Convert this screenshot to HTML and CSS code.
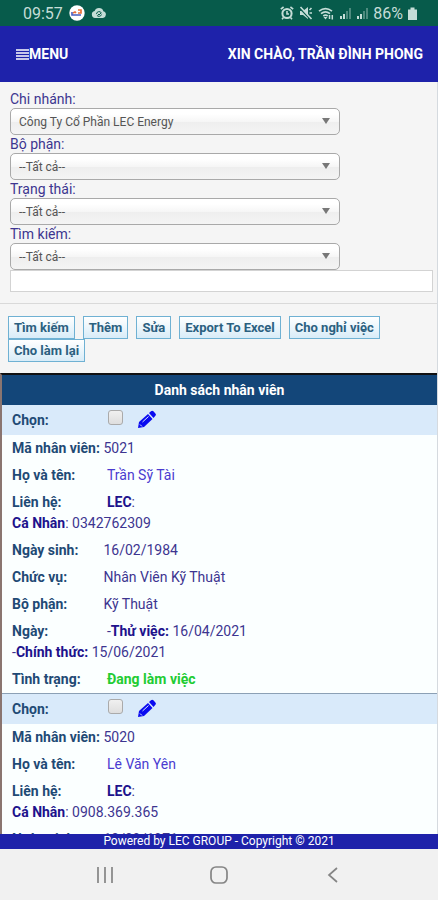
FILE: index.html
```html
<!DOCTYPE html>
<html lang="vi">
<head>
  <meta charset="UTF-8">
  <meta name="viewport" content="width=device-width, initial-scale=1.0">
  <title>Danh sách nhân viên</title>
  <link rel="stylesheet" href="styles.css">
</head>
<body>
  <div class="status_bar">
    <span class="time">09:57</span>
    <svg class="app_icon" width="16" height="16" viewBox="0 0 16 16">
      <circle cx="8" cy="8" r="7.7" fill="#fff"/>
      <path d="M3 7v3h9" fill="none" stroke="#4a5dc0" stroke-width="1.6"/>
      <path d="M4 8l2-1 1 1M9 5h3v3H9" fill="none" stroke="#e8703a" stroke-width="1.7"/>
    </svg>
    <svg width="16" height="12" viewBox="0 0 16 12">
      <path d="M4 11a3.500 3.500 0 0 1-.4-6.900A4.600 4.600 0 0 1 12.400 4.200 3.500 3.500 0 0 1 12 11z" fill="#c5ddd7"/>
      <path d="M5.500 7a2.600 2.600 0 0 1 5-.8M10.500 7.500a2.600 2.600 0 0 1-4.600.8M7 7l1 1 2-2" fill="none" stroke="#075b4b" stroke-width="1"/>
    </svg>
    <span class="status_right">
      <svg width="14" height="14" viewBox="0 0 14 14" fill="none" stroke="#c5ddd7" stroke-width="2">
        <circle cx="7" cy="7.500" r="4.600"/>
        <path d="M.8 3.200L3.600 1M13.200 3.200L10.400 1M7 5v3h2M3.500 11.500L2 13.200M10.500 11.500l1.500 1.700" stroke-width="1.600"/>
      </svg>
      <svg width="14" height="14" viewBox="0 0 14 14">
        <path d="M1 5h3l5-4v12L4 9H1z" fill="#c5ddd7"/>
        <path d="M1 2.500l10.500 11" stroke="#075b4b" stroke-width="1.400"/>
        <path d="M1.500 1l11 12M10.500 4l2-2M10.500 7H13" stroke="#c5ddd7" stroke-width="1.600"/>
      </svg>
      <svg width="16" height="13" viewBox="0 0 16 13" fill="none" stroke="#c5ddd7" stroke-width="1.700">
        <path d="M1 4.200Q7.500-1 14 4.200M3 6.700q4.500-3.500 9 0M5.300 9q2.200-1.800 4.400 0"/>
        <path d="M7.500 12.500l-2-2.500h4z" fill="#c5ddd7" stroke="none"/>
        <path d="M11.500 12V8M14.300 8v4.500" stroke-width="1.500"/>
      </svg>
      <svg width="12" height="12" viewBox="0 0 12 12">
        <path d="M1 9h2v3H1zM4 7h2v5H4z" fill="#c5ddd7"/>
        <path d="M7 4h2v8H7zM10 1h2v11h-2z" fill="#4d8b7e"/>
      </svg>
      <svg width="12" height="12" viewBox="0 0 12 12">
        <path d="M1 9h2v3H1zM4 7h2v5H4z" fill="#c5ddd7"/>
        <path d="M7 4h2v8H7zM10 1h2v11h-2z" fill="#4d8b7e"/>
      </svg>
      <span class="percent">86%</span>
      <svg width="9" height="13" viewBox="0 0 9 13">
        <path d="M0 2.500h2.500V0.500h4v2H9V13H0z" fill="#c5ddd7"/>
      </svg>
    </span>
  </div>

  <header class="top_bar">
    <button class="menu_btn" type="button">
      <svg width="13" height="11" viewBox="0 0 13 11" stroke="#fff" stroke-width="1.600">
        <path d="M0 1h13M0 4h13M0 7h13M0 10h13"/>
      </svg>MENU</button>
    <span class="hello">XIN CHÀO, TRẦN ĐÌNH PHONG</span>
  </header>

  <main class="content">
    <form class="filter">
      <label for="branch">Chi nhánh:</label>
      <div class="select_wrap">
        <select id="branch"><option>Công Ty Cổ Phần LEC Energy</option></select>
      </div>
      <label for="dept">Bộ phận:</label>
      <div class="select_wrap">
        <select id="dept"><option>--Tất cả--</option></select>
      </div>
      <label for="state">Trạng thái:</label>
      <div class="select_wrap">
        <select id="state"><option>--Tất cả--</option></select>
      </div>
      <label for="search_by">Tìm kiếm:</label>
      <div class="select_wrap">
        <select id="search_by"><option>--Tất cả--</option></select>
      </div>
      <input class="keyword" type="text" aria-label="Từ khóa">
    </form>

    <div class="actions">
      <button type="button">Tìm kiếm</button>
      <button type="button">Thêm</button>
      <button type="button">Sửa</button>
      <button type="button">Export To Excel</button>
      <button type="button">Cho nghỉ việc</button>
      <button type="button">Cho làm lại</button>
    </div>

    <table class="staff">
      <caption>Danh sách nhân viên</caption>
      <tbody>
        <tr>
          <td class="pick">
            <label class="name" for="pick1">Chọn:</label>
            <input type="checkbox" id="pick1">
            <a href="#" aria-label="Sửa 5021"><svg width="20" height="20" viewBox="0 0 20 20"><path d="M1 18l1-6L11 4l4.500 5L7 17zM12 3L14 1.200q1.200-1 2.400 0l2 2.200q1.200 1.200 0 2.400L16.500 8z" fill="#0a0af0"/><path d="M5.500 12l6-5.500M3 14.500l2 2" stroke="#dcebfa" stroke-width="1"/></svg></a>
          </td>
          <td><span class="name">Mã nhân viên:</span> 5021</td>
          <td><span class="name">Họ và tên:</span> &nbsp;<a href="#">Trần Sỹ Tài</a></td>
          <td><span class="name">Liên hệ:</span> &nbsp;<b>LEC</b>:<br><b>Cá Nhân</b>: 0342762309</td>
          <td><span class="name">Ngày sinh:</span> 16/02/1984</td>
          <td><span class="name">Chức vụ:</span> Nhân Viên Kỹ Thuật</td>
          <td><span class="name">Bộ phận:</span> Kỹ Thuật</td>
          <td><span class="name">Ngày:</span> &nbsp;-<b>Thử việc:</b> 16/04/2021<br>-<b>Chính thức:</b> 15/06/2021</td>
          <td><span class="name">Tình trạng:</span> &nbsp;<b class="working">Đang làm việc</b></td>
        </tr>
        <tr>
          <td class="pick">
            <label class="name" for="pick2">Chọn:</label>
            <input type="checkbox" id="pick2">
            <a href="#" aria-label="Sửa 5020"><svg width="20" height="20" viewBox="0 0 20 20"><path d="M1 18l1-6L11 4l4.500 5L7 17zM12 3L14 1.200q1.200-1 2.400 0l2 2.200q1.200 1.200 0 2.400L16.500 8z" fill="#0a0af0"/><path d="M5.500 12l6-5.500M3 14.500l2 2" stroke="#dcebfa" stroke-width="1"/></svg></a>
          </td>
          <td><span class="name">Mã nhân viên:</span> 5020</td>
          <td><span class="name">Họ và tên:</span> &nbsp;<a href="#">Lê Văn Yên</a></td>
          <td><span class="name">Liên hệ:</span> &nbsp;<b>LEC</b>:<br><b>Cá Nhân</b>: 0908.369.365</td>
          <td><span class="name">Ngày sinh:</span> 10/09/1971</td>
        </tr>
      </tbody>
    </table>
  </main>

  <footer class="copyright">Powered by LEC GROUP - Copyright © 2021</footer>

  <nav class="phone_nav">
    <button type="button" aria-label="Recent">
      <svg width="18" height="18" viewBox="0 0 18 18" stroke="#858585" stroke-width="1.700"><path d="M2 1v16M9 1v16M16 1v16"/></svg>
    </button>
    <button type="button" aria-label="Home">
      <svg width="18" height="18" viewBox="0 0 18 18" fill="none" stroke="#858585" stroke-width="1.700"><rect x="1" y="1" width="16" height="16" rx="5"/></svg>
    </button>
    <button type="button" aria-label="Back">
      <svg width="18" height="18" viewBox="0 0 18 18" fill="none" stroke="#858585" stroke-width="1.700"><path d="M13 2L5 9l8 7"/></svg>
    </button>
  </nav>
</body>
</html>
```

FILE: styles.css
```css
*{
  margin: 0;
  padding: 0;
  box-sizing: border-box;
}

body{
  display: flex;
  flex-direction: column;
  height: 100vh;
  overflow: hidden;
  font-family: Roboto, "Liberation Sans", sans-serif;
  font-size: 14px;
  color: #3d3590;
  background: #f5f5f5;
}

a{
  color: #4a3bd0;
  text-decoration: none;
}

button{
  font-family: inherit;
  border: none;
  background: none;
  cursor: pointer;
}

svg{
  display: block;
}

/* status bar */
.status_bar{
  display: flex;
  align-items: center;
  gap: 6px;
  height: 26px;
  padding: 0 21px 0 23px;
  font-size: 16px;
  color: #c5ddd7;
  background: #075b4b;
}
.status_right{
  display: flex;
  align-items: center;
  gap: 5px;
  margin-left: auto;
}

/* top bar */
.top_bar{
  display: flex;
  justify-content: space-between;
  align-items: center;
  height: 56px;
  padding: 0 15px 0 16px;
  font-weight: bold;
  color: #fff;
  background: #1e22aa;
}
.menu_btn{
  display: flex;
  align-items: center;
  font-size: 14px;
  font-weight: bold;
  color: #fff;
}

.content{
  flex: 1;
  min-height: 0;
  overflow: hidden;
  border-right: 1px solid #d5dadf;
}

/* filter */
.filter{
  padding: 8px 4px 11px 10px;
  border-bottom: 1px solid #d9d9d9;
}
.filter label{
  display: block;
  line-height: 18px;
}
.select_wrap{
  position: relative;
  width: 78%;
}
.select_wrap::after{
  content: "";
  position: absolute;
  top: 10px;
  right: 10px;
  border: 4px solid transparent;
  border-top: 6px solid #777;
  border-bottom: none;
  pointer-events: none;
}
.select_wrap select{
  display: block;
  width: 100%;
  height: 27px;
  padding: 0 8px;
  font-family: inherit;
  font-size: 12px;
  color: #555;
  appearance: none;
  border: 1px solid #a9a9a9;
  border-radius: 5px;
  background: linear-gradient(#fff 20%, #f6f6f6 50%, #eee 52%, #f4f4f4 100%);
}
.keyword{
  display: block;
  width: 100%;
  height: 22px;
  padding: 0 4px;
  border: 1px solid #d3d3d3;
  background: #fff;
}

/* action buttons */
.actions{
  display: flex;
  flex-wrap: wrap;
  column-gap: 8px;
  padding: 12px 8px 11px;
}
.actions button{
  height: 23px;
  padding: 0 5px;
  font-size: 13px;
  font-weight: bold;
  color: #2b6080;
  border: 1px solid #6fb1d3;
  background: linear-gradient(#fff, #d8ecf8);
}

/* staff list */
.staff{
  display: block;
  border-top: 2px solid #111;
  border-left: 2px solid #8a7570;
  background: #fbffff;
}
.staff caption{
  display: block;
  line-height: 30px;
  font-weight: bold;
  color: #fff;
  background: #134679;
}
.staff tbody,
.staff tr{
  display: block;
}
.staff tr + tr{
  border-top: 1px solid #8ba0b5;
}
.staff td{
  display: block;
  padding: 3px 10px;
  line-height: 21px;
}
.staff .pick{
  display: flex;
  align-items: flex-start;
  height: 30px;
  padding: 5px 10px;
  background: #d9eafa;
}
.name{
  display: inline-block;
  min-width: 88px;
  font-weight: bold;
  color: #1f4a75;
}
.pick input{
  width: 15px;
  height: 15px;
  margin: 0 14px 0 8px;
  appearance: none;
  border: 1px solid #aaa;
  border-radius: 3px;
  background: linear-gradient(#f0f0f0, #dedede);
}
.staff b{
  color: #20128c;
}
.staff .working{
  color: #22cc33;
}

.copyright{
  line-height: 15px;
  font-size: 12px;
  text-align: center;
  color: #fff;
  background: #1e22aa;
}

.phone_nav{
  display: flex;
  justify-content: center;
  align-items: center;
  gap: 96px;
  height: 51px;
  background: #f1f1f1;
}
```
